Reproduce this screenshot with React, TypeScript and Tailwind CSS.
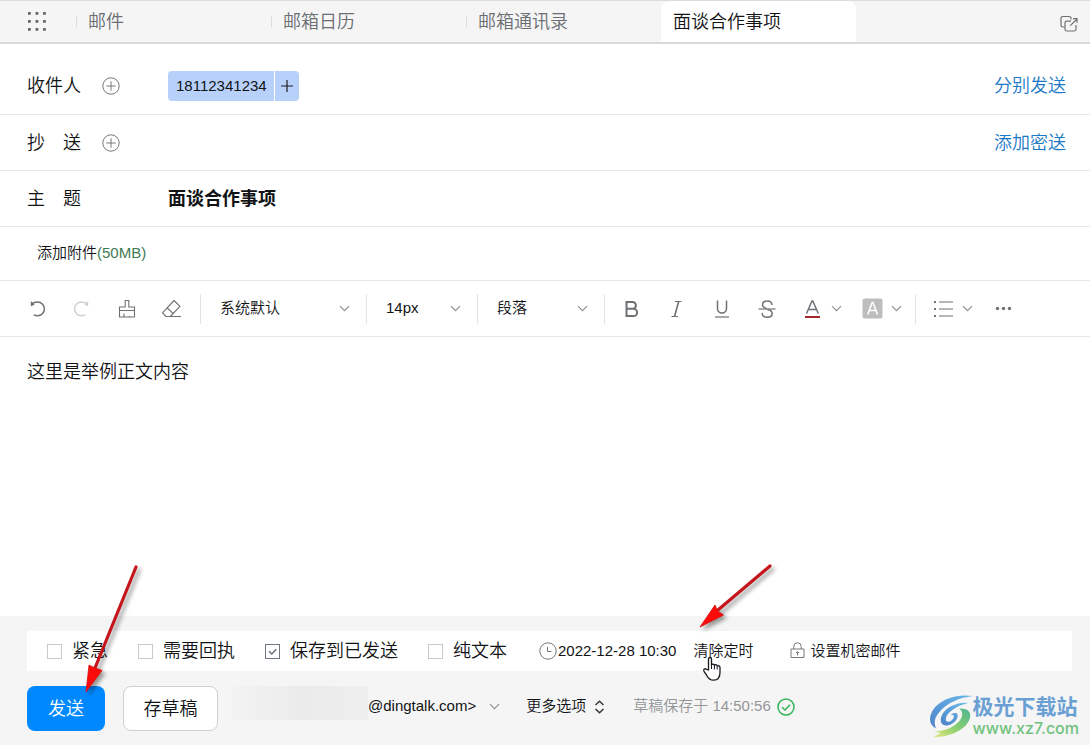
import type { ReactNode } from "react";

const tabs = ["邮件", "邮箱日历", "邮箱通讯录"];

function Chevron({ className = "" }: { className?: string }) {
  return (
    <svg className={className} width="11" height="11" viewBox="0 0 11 11" fill="none" stroke="#8c8f92" strokeWidth="1.2" aria-hidden="true">
      <path d="M1 3.2 5.5 7.7 10 3.2" />
    </svg>
  );
}

function PlusCircle() {
  return (
    <svg width="18" height="18" viewBox="0 0 18 18" fill="none" stroke="#75787b" aria-hidden="true">
      <circle cx="9" cy="9" r="8.2" />
      <path d="M9 4.3v9.4M4.3 9h9.4" />
    </svg>
  );
}

function Separator() {
  return <span className="h-[30px] w-px shrink-0 bg-[#e4e4e6]" />;
}

function ToolButton({ label, wide, children }: { label: string; wide?: boolean; children: ReactNode }) {
  return (
    <button
      type="button"
      aria-label={label}
      className={
        wide
          ? "flex h-[30px] w-[60px] shrink-0 items-center gap-2 pl-3 text-[#6e7174]"
          : "flex h-[30px] w-[45px] shrink-0 items-center justify-center text-[#6e7174]"
      }
    >
      {children}
      {wide && <Chevron className="shrink-0" />}
    </button>
  );
}

function ToolSelect({ label, value, className }: { label: string; value: string; className: string }) {
  return (
    <div className={`relative flex shrink-0 items-center ${className}`}>
      <select
        aria-label={label}
        defaultValue={value}
        className="h-[30px] w-full appearance-none bg-transparent pl-[19px] text-[15px] text-[#111315] outline-none"
      >
        <option value={value}>{value}</option>
      </select>
      <Chevron className="pointer-events-none absolute right-4" />
    </div>
  );
}

function CheckOption({ label, checked = false }: { label: string; checked?: boolean }) {
  return (
    <label className="flex shrink-0 items-center gap-[10px] text-lg text-[#111315]">
      <span className="relative flex">
        <input
          type="checkbox"
          defaultChecked={checked}
          className="peer size-[15px] appearance-none border border-[#c9c9c9] bg-white checked:border-[#6f7780]"
        />
        <svg
          className="pointer-events-none absolute inset-0 opacity-0 peer-checked:opacity-100"
          width="15"
          height="15"
          viewBox="0 0 15 15"
          fill="none"
          stroke="#6a7075"
          strokeWidth="1.5"
          aria-hidden="true"
        >
          <path d="M4 7.2 6.8 10 11.3 5.2" />
        </svg>
      </span>
      {label}
    </label>
  );
}

export default function App() {
  return (
    <div className="flex min-h-screen flex-col overflow-hidden bg-white font-['Liberation_Sans','Noto_Sans_CJK_SC',sans-serif] font-[350] text-[#111315]">
      <header className="flex h-11 shrink-0 items-stretch border-t border-b-2 border-t-[#dcdcdc] border-b-[#d9d9d9] bg-[#f5f5f5]">
        <button type="button" aria-label="应用" className="flex w-[76px] shrink-0 items-center pl-[27px]">
          <svg width="20" height="20" viewBox="0 0 20 20" fill="#63666a" aria-hidden="true">
            {[0, 8, 16].map((y) => [1, 8.5, 16].map((x) => <rect key={`${x}-${y}`} x={x} y={y} width="2.8" height="2.8" rx="0.5" />))}
          </svg>
        </button>
        <nav className="flex">
          {tabs.map((tab) => (
            <a key={tab} href="#" className="flex w-[195px] items-center text-lg text-[#6b6e72]">
              <span className="h-[11px] w-px bg-[#dcdcdc]" />
              <span className="pl-[11px]">{tab}</span>
            </a>
          ))}
          <a href="#" aria-current="page" className="flex w-[195px] items-center rounded-t-lg bg-white pl-3 text-lg text-[#111315]">
            面谈合作事项
          </a>
        </nav>
        <button type="button" aria-label="新窗口打开" className="ml-auto flex items-center pt-1 pr-3">
          <svg width="18" height="18" viewBox="0 0 18 18" fill="none" stroke="#6e7174" strokeWidth="1.2" aria-hidden="true">
            <path d="M4.500 12H2.800A1.800 1.800 0 0 1 1 10.200V3.300a1.800 1.800 0 0 1 1.800-1.800h6.400A1.800 1.800 0 0 1 11 3.300v1.200" />
            <path d="M11 6.200H6.800A1.800 1.800 0 0 0 5 8v6.200A1.800 1.800 0 0 0 6.800 16h7.400a1.800 1.800 0 0 0 1.800-1.800V10" />
            <path d="M10.300 10.700 17 4M13 3.700h4v4" />
          </svg>
        </button>
      </header>

      <section className="flex h-[71px] shrink-0 items-center border-b border-[#e8e8e8] pt-[14px] pr-6 pl-[27px] text-lg">
        <span className="w-[75px]">收件人</span>
        <button type="button" aria-label="添加收件人" className="w-[66px]">
          <PlusCircle />
        </button>
        <div className="flex h-[30px] gap-px overflow-hidden rounded text-[15px]">
          <span className="flex items-center bg-[#b8d1fb] pr-[7px] pl-2">18112341234</span>
          <button type="button" aria-label="添加联系人" className="flex w-6 items-center justify-center bg-[#b8d1fb]">
            <svg width="12" height="12" viewBox="0 0 12 12" stroke="#1b1d20" strokeWidth="1.2" aria-hidden="true">
              <path d="M6 0v12M0 6h12" />
            </svg>
          </button>
        </div>
        <a href="#" className="ml-auto text-[#1a78c6]">分别发送</a>
      </section>

      <section className="flex h-14 shrink-0 items-center border-b border-[#e8e8e8] pr-6 pl-[27px] text-lg">
        <label htmlFor="cc" className="flex w-[54px] justify-between">
          <span>抄</span>
          <span>送</span>
        </label>
        <button type="button" aria-label="添加抄送" className="ml-[21px] w-[66px]">
          <PlusCircle />
        </button>
        <input id="cc" className="min-w-0 flex-1 outline-none" />
        <a href="#" className="text-[#1a78c6]">添加密送</a>
      </section>

      <section className="flex h-14 shrink-0 items-center border-b border-[#e8e8e8] pr-6 pl-[27px] text-lg">
        <label htmlFor="subject" className="flex w-[54px] justify-between">
          <span>主</span>
          <span>题</span>
        </label>
        <input id="subject" defaultValue="面谈合作事项" className="ml-[87px] min-w-0 flex-1 font-bold outline-none" />
      </section>

      <section className="flex h-[54px] shrink-0 items-center border-b border-[#e8e8e8] pl-[37px] text-[15px]">
        <button type="button">
          添加附件<span className="text-[#3e7a54]">(50MB)</span>
        </button>
      </section>

      <div role="toolbar" aria-label="格式" className="flex h-14 shrink-0 items-center border-b border-[#e8e8e8] pl-[14px]">
        <ToolButton label="撤销">
          <svg width="18" height="20" viewBox="0 0 18 20" fill="none" stroke="currentColor" strokeWidth="1.5">
            <path d="M3.500 4.800C5.500 3.500 7.500 3 9.500 3a6.900 6.900 0 0 1 0 13.800c-1.400 0-2.700-.3-3.800-.9" />
            <path d="M2.800 2v5.200l3.900-1.400z" fill="currentColor" stroke="none" />
          </svg>
        </ToolButton>
        <ToolButton label="重做">
          <svg width="18" height="20" viewBox="0 0 18 20" fill="none" stroke="#d0d1d3" strokeWidth="1.5">
            <path d="M14.500 4.800C12.500 3.500 10.500 3 8.500 3a6.900 6.900 0 0 0 0 13.800c1.400 0 2.700-.3 3.800-.9" />
            <path d="M15.200 2v5.200l-3.900-1.400z" fill="#d0d1d3" stroke="none" />
          </svg>
        </ToolButton>
        <ToolButton label="格式刷">
          <svg width="18" height="20" viewBox="0 0 18 20" fill="none" stroke="currentColor" strokeWidth="1.1">
            <path d="M7.200 8V1.500h3.600V8h5.700v10h-15V8zM1.500 11.500h15M6 18v-3.500M11.500 18v-1" />
          </svg>
        </ToolButton>
        <ToolButton label="清除格式">
          <svg width="21" height="20" viewBox="0 0 21 20" fill="none" stroke="currentColor" strokeWidth="1.1" strokeLinejoin="round">
            <path d="M5 17.500 1.500 13.800 13 1.500l6 5.800L9.300 17.500zM6.300 9l6 5.600M5 17.500h15" />
          </svg>
        </ToolButton>
        <span className="w-[6px] shrink-0" />
        <Separator />
        <ToolSelect label="字体" value="系统默认" className="w-[165px]" />
        <Separator />
        <ToolSelect label="字号" value="14px" className="w-[110px]" />
        <Separator />
        <ToolSelect label="段落样式" value="段落" className="w-[126px]" />
        <Separator />
        <span className="w-1 shrink-0" />
        <ToolButton label="加粗">
          <svg width="18" height="20" viewBox="0 0 18 20" fill="none" stroke="currentColor" strokeWidth="2">
            <path d="M3.500 3h6a3.400 3.400 0 0 1 0 6.800h-6zM3.500 9.800h7a3.600 3.600 0 0 1 0 7.200h-7z" />
          </svg>
        </ToolButton>
        <ToolButton label="斜体">
          <svg width="18" height="20" viewBox="0 0 18 20" fill="none" stroke="currentColor">
            <path d="M7 2.500h6.500M3.500 17.500H10" />
            <path d="m10.700 2.500-4.200 15" strokeWidth="1.600" />
          </svg>
        </ToolButton>
        <ToolButton label="下划线">
          <svg width="18" height="20" viewBox="0 0 18 20" fill="none" stroke="currentColor" strokeWidth="1.500">
            <path d="M4.500 1.500v8a4.500 4.500 0 0 0 9 0v-8" />
            <path d="M2 18h14" strokeWidth="1.200" />
          </svg>
        </ToolButton>
        <ToolButton label="删除线">
          <svg width="18" height="20" viewBox="0 0 18 20" fill="none" stroke="currentColor" strokeWidth="1.500">
            <path d="M14 6a4 4 0 0 0-4.500-4C6.500 2 4.500 3.500 4.500 5.700c0 2 1.500 3 4 3.800M9.500 10.500c3 .8 4.700 1.700 4.700 3.900 0 2.400-2.200 3.800-5 3.800-3 0-5-1.700-5.200-4.200" />
            <path d="M.5 10h17" strokeWidth="1.200" />
          </svg>
        </ToolButton>
        <span className="w-px shrink-0" />
        <ToolButton label="文字颜色" wide>
          <svg width="21" height="20" viewBox="0 0 21 20" fill="none" stroke="currentColor" strokeWidth="1.500" className="shrink-0">
            <path d="m4.500 14.500 5.500-12.500h.8l5.500 12.500M6.500 10.500h7.800" />
            <path d="M3 18h15" stroke="#a3262b" strokeWidth="2" />
          </svg>
        </ToolButton>
        <ToolButton label="背景颜色" wide>
          <svg width="21" height="21" viewBox="0 0 21 21" fill="none" stroke="#fff" strokeWidth="1.600" className="shrink-0">
            <rect x=".5" y=".5" width="20" height="20" rx="2" fill="#bdbdbd" stroke="none" />
            <path d="m5.700 16.500 4.500-12h.8l4.500 12M7.300 12.500h6.600" />
          </svg>
        </ToolButton>
        <span className="w-[5px] shrink-0" />
        <Separator />
        <span className="w-[5px] shrink-0" />
        <ToolButton label="列表" wide>
          <svg width="21" height="18" viewBox="0 0 21 18" fill="none" stroke="currentColor" strokeWidth="1.200" className="shrink-0">
            <path d="M6 2h14M6 9h14M6 16h14" />
            <path d="M1 2h2M1 9h2M1 16h2" strokeWidth="2" />
          </svg>
        </ToolButton>
        <ToolButton label="更多">
          <svg width="17" height="5" viewBox="0 0 17 5" fill="currentColor">
            <circle cx="2.500" cy="2.500" r="1.700" />
            <circle cx="8.500" cy="2.500" r="1.700" />
            <circle cx="14.500" cy="2.500" r="1.700" />
          </svg>
        </ToolButton>
      </div>

      <textarea
        aria-label="正文"
        defaultValue="这里是举例正文内容"
        className="min-h-40 w-full flex-1 resize-none px-[27px] pt-[21px] text-lg outline-none"
      />

      <footer className="relative shrink-0 bg-[#f5f5f5] pt-[15px] pr-[18px] pb-[14px] pl-[27px]">
        <div className="flex h-10 items-center bg-white pl-5 text-[15px]">
          <div className="flex gap-[30px]">
            <CheckOption label="紧急" />
            <CheckOption label="需要回执" />
            <CheckOption label="保存到已发送" checked />
            <CheckOption label="纯文本" />
          </div>
          <button type="button" className="ml-8 flex shrink-0 items-center gap-px">
            <svg width="18" height="18" viewBox="0 0 18 18" fill="none" stroke="#75787b" aria-hidden="true">
              <circle cx="9" cy="9" r="8.200" />
              <path d="M8.500 5v4.500h4" />
            </svg>
            2022-12-28 10:30
          </button>
          <button type="button" className="ml-[17px] shrink-0">清除定时</button>
          <button type="button" className="ml-[37px] flex shrink-0 items-center gap-[5px]">
            <svg width="15" height="18" viewBox="0 0 15 18" fill="none" stroke="#75787b" aria-hidden="true">
              <path d="M1 7h13v8.500H1zM3.800 7V4.500a3.700 3.700 0 0 1 7.400 0V7M7.500 9.500v4M6 10.500h3" />
            </svg>
            设置机密邮件
          </button>
        </div>

        <div className="mt-[15px] flex h-[45px] items-center text-[15px]">
          <button type="button" className="h-full w-[78px] shrink-0 rounded-lg bg-[#0089ff] text-lg text-white">发送</button>
          <button type="button" className="ml-[18px] h-full w-[95px] shrink-0 rounded-lg border border-[#d0d0d0] bg-white text-lg">存草稿</button>
          <div className="flex h-full items-center pb-1">
            <button type="button" className="ml-[14px] flex h-full shrink-0 items-center">
              <span className="h-[34px] w-[136px] self-start bg-linear-to-r from-[#f3f3f3] via-[#ebebeb] to-[#eeeeee]" />
              @dingtalk.com&gt;
              <Chevron className="ml-[13px]" />
            </button>
            <button type="button" className="ml-[26px] flex shrink-0 items-center gap-2">
              更多选项
              <svg width="11" height="14" viewBox="0 0 11 14" fill="none" stroke="#33363a" strokeWidth="1.500" aria-hidden="true">
                <path d="M1.500 5 5.500 1.300 9.500 5M1.500 9l4 3.700 4-3.700" />
              </svg>
            </button>
            <span className="ml-7 flex shrink-0 items-center gap-[6px] text-[#949698]">
              草稿保存于 14:50:56
              <svg width="18" height="18" viewBox="0 0 18 18" fill="none" stroke="#32b454" strokeWidth="1.500" aria-hidden="true">
                <circle cx="9" cy="9" r="8" />
                <path d="m5 9.200 3 2.800 5-5.300" />
              </svg>
            </span>
          </div>
        </div>

        <div className="pointer-events-none absolute right-[11px] bottom-[7px] flex items-center">
          <svg width="44" height="44" viewBox="0 0 44 44" aria-hidden="true">
            <defs>
              <linearGradient id="swooshBlue" x1="0" y1="1" x2="1" y2="0">
                <stop offset="0" stopColor="#4c83c9" />
                <stop offset=".6" stopColor="#5fa4de" />
                <stop offset="1" stopColor="#6cbbe9" />
              </linearGradient>
              <linearGradient id="swooshGreen" x1="0" y1="1" x2="1" y2="0">
                <stop offset="0" stopColor="#e3e77c" />
                <stop offset=".5" stopColor="#86cd72" />
                <stop offset="1" stopColor="#4fb592" />
              </linearGradient>
            </defs>
            <path d="M44 2C28-.5 11 5 4 16c-5 8-3.500 15 3 18.500-2.500-5.500-1.500-11 3.500-16.500C18 9 29 4 44 2z" fill="url(#swooshBlue)" />
            <path d="M39 9c-10-1-22 4-26 12-3 6-.5 11 5 10.500 6.500-.6 12-7 10.500-11-1-2.500-5-1.500-7 .5 3-.8 4 .8 3 3-1.200 2.800-4.500 4.500-6.500 3.500-2.500-1.500-.8-6.500 3.500-10C26 13.500 32 10.500 39 9z" fill="url(#swooshBlue)" />
            <path d="M30 14.500c4 2.500 4.500 8 0 13C24 34 14 37.500 5 37.500l7 1.500-7.500 4C20 43 35 37 40 26.500c4-8-1-12.500-10-12z" fill="url(#swooshGreen)" />
          </svg>
          <div>
            <div className="text-[21px] leading-6 font-bold text-[#6a9fd3]">极光下载站</div>
            <div className="font-['Inter','Liberation_Sans',sans-serif] text-base leading-[18px] font-medium text-[#6fc27c]">www.xz7.com</div>
          </div>
        </div>

        <svg className="pointer-events-none absolute -top-[55px] left-[78px] drop-shadow-[3px_3px_2px_rgba(0,0,0,0.4)]" width="66" height="136" viewBox="78 561 66 136" aria-hidden="true">
          <path d="M136 567 95 668" stroke="#c4161c" strokeWidth="3.200" strokeLinecap="round" />
          <path d="M86 692 89 665l5 2.500 8 3z" fill="#fb0a0a" stroke="#d81010" strokeWidth=".8" />
        </svg>
        <svg className="pointer-events-none absolute -top-[57px] left-[694px] drop-shadow-[3px_3px_2px_rgba(0,0,0,0.4)]" width="84" height="74" viewBox="694 559 84 74" aria-hidden="true">
          <path d="M770 566 718 610" stroke="#c4161c" strokeWidth="3.200" strokeLinecap="round" />
          <path d="M700 627 715 605l2.500 6 6 4z" fill="#fb0a0a" stroke="#d81010" strokeWidth=".8" />
        </svg>
        <svg className="pointer-events-none absolute top-[40px] left-[702px]" width="20" height="26" viewBox="0 0 20 26" fill="#fff" stroke="#16181c" strokeWidth="1.300" strokeLinejoin="round" aria-hidden="true">
          <path d="M6.500 14V3.200c0-2.300 3-2.300 3 0V9c.4-1.400 2.800-1.200 2.900.4.700-1.200 2.700-.8 2.800.7.900-.8 2.700-.2 2.800 1.400v4.700c0 5-2.200 8-6.500 8-3.500 0-5-1.500-6.600-4.500L2 15.300c-1-2 .9-3.300 2.400-2z" />
          <path d="M9.500 9v4M12.400 9.500v4M15.200 10.500v3" strokeWidth="1" />
        </svg>
      </footer>
    </div>
  );
}
